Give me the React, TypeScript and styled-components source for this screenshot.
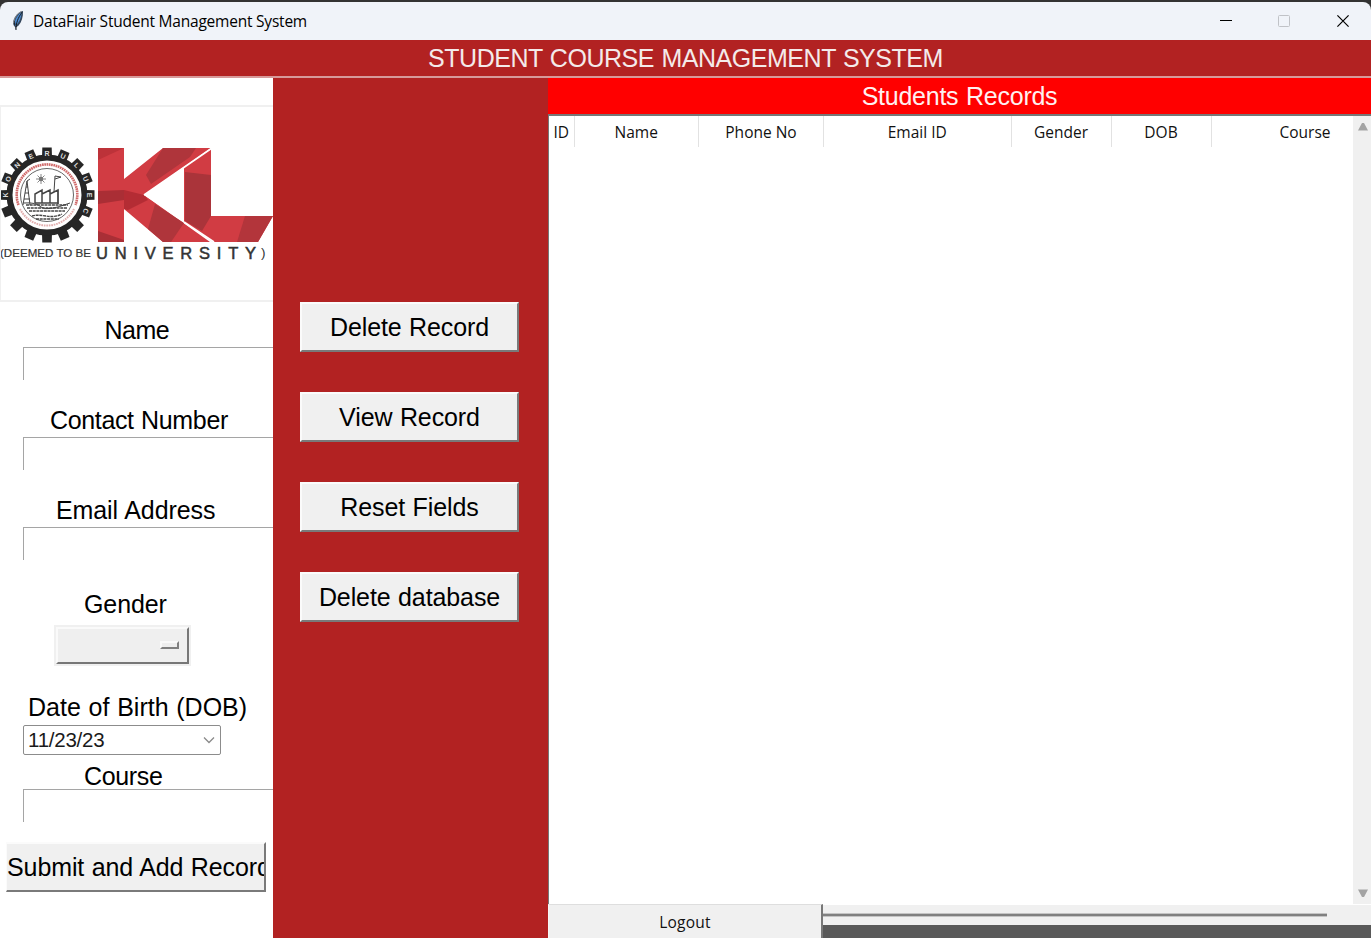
import React from "react";
import styled, { createGlobalStyle } from "styled-components";

const Global = createGlobalStyle`
  * { box-sizing: border-box; }
  html, body { margin: 0; padding: 0; height: 100%; overflow: hidden; background: #333333; }
`;

const tk = `"Liberation Sans", Arial, sans-serif`;
const ui = `"Open Sans", "Noto Sans", sans-serif`;

const Desktop = styled.div`
  width: 1371px;
  height: 938px;
  padding-top: 2px;
  background: #333333;
  overflow: hidden;
`;
const AppWindow = styled.div`
  display: flex;
  flex-direction: column;
  height: 936px;
  border-radius: 8px 8px 0 0;
  overflow: hidden;
`;
const TitleBar = styled.header`
  display: flex;
  align-items: center;
  flex: none;
  height: 38px;
  padding-left: 10px;
  background: #f0f3f9;
  font-family: ${ui};
`;
const Caption = styled.span<{ $w: number; $gap?: number }>`
  display: block;
  width: ${(p) => p.$w}px;
  margin: -1px 0 0 ${(p) => p.$gap ?? 0}px;
  font: 15.5px/20px ${ui};
  letter-spacing: -0.22px;
  white-space: nowrap;
  color: #000;
`;
const WindowControls = styled.div`
  display: flex;
  margin: 0 -1px 0 auto;
`;
const ControlButton = styled.button`
  display: flex;
  align-items: center;
  justify-content: center;
  width: 58.5px;
  height: 38px;
  padding: 0;
  border: 0;
  background: none;
`;
const Banner = styled.h1`
  display: flex;
  align-items: center;
  justify-content: center;
  flex: none;
  height: 38px;
  margin: 0;
  border-bottom: 2px solid #d79a9a;
  background: #b22222;
  color: #f4eaea;
  font: 400 25px/36px ${tk};
  letter-spacing: -0.46px;
  word-spacing: 0.9px;
`;
const Body = styled.main`
  display: grid;
  grid-template-columns: 273px 275px 823px;
  height: 860px;
`;
const FormPanel = styled.section`
  display: flex;
  flex-direction: column;
  align-items: flex-start;
  overflow: hidden;
  background: #fff;
`;
const LogoBox = styled.div`
  flex: none;
  width: 273px;
  height: 197px;
  margin-top: 27px;
  border: solid #f0f0f0;
  border-width: 2px 0 2px 1px;
`;
const FieldLabel = styled.label<{ $left: number; $top: number; $ls?: number }>`
  flex: none;
  height: 28px;
  margin: ${(p) => p.$top}px 0 0 ${(p) => p.$left}px;
  font: 25px/28px ${tk};
  letter-spacing: ${(p) => p.$ls ?? -0.35}px;
  word-spacing: 0.8px;
  white-space: nowrap;
  color: #000;
`;
const TextField = styled.input<{ $top?: number }>`
  flex: none;
  width: 260px;
  height: 33px;
  margin: ${(p) => p.$top ?? 3}px 0 0 23px;
  padding: 0 4px;
  border: solid #a5a5a5;
  border-width: 1.5px 0 0 1.5px;
  border-radius: 0;
  background: #fff;
  outline: 0;
  font: 20px ${tk};
`;
const OptionMenu = styled.div`
  flex: none;
  width: 137px;
  height: 41px;
  margin: 7px 0 0 54px;
  padding: 2px;
  background: #f0f0f0;
`;
const OptionFace = styled.div`
  display: flex;
  align-items: center;
  justify-content: flex-end;
  width: 133px;
  height: 37px;
  padding: 0 8px 2px 0;
  border: 2px solid;
  border-color: #fafafa #777 #777 #fafafa;
  background: #efefef;
`;
const OptionMark = styled.span`
  width: 19px;
  height: 8px;
  border: 2px solid;
  border-color: #fafafa #808080 #808080 #fafafa;
`;
const DateEntry = styled.div`
  display: flex;
  align-items: center;
  justify-content: space-between;
  flex: none;
  width: 198px;
  height: 30px;
  margin: 4px 0 0 23px;
  padding: 0 5px 0 4px;
  border: 1px solid #8c8c8c;
  border-radius: 2px;
  background: #fff;
  font: 20.5px/28px ${tk};
  letter-spacing: -0.25px;
  color: #1a1a1a;
`;
const RaisedButton = styled.button<{ $w: number }>`
  display: flex;
  align-items: center;
  justify-content: center;
  flex: none;
  width: ${(p) => p.$w}px;
  height: 50px;
  padding: 0;
  border: 2px solid;
  border-color: #fbfbfb #7a7a7a #7a7a7a #fbfbfb;
  border-radius: 0;
  background: #f0f0f0;
  color: #000;
  font: 25px/30px ${tk};
  letter-spacing: -0.1px;
  word-spacing: 0.6px;
  white-space: nowrap;
  overflow: hidden;
`;
const SubmitButton = styled(RaisedButton)`
  justify-content: flex-start;
  margin: 20px 0 0 6px;
  border-left-width: 1px;
`;
const ActionsPanel = styled.nav`
  display: flex;
  flex-direction: column;
  align-items: flex-start;
  gap: 40px;
  padding: 224px 0 0 27px;
  background: #b22222;
`;
const RecordsPanel = styled.section`
  display: flex;
  flex-direction: column;
  min-width: 0;
  background: #595959;
`;
const RecordsTitle = styled.h2`
  flex: none;
  height: 36px;
  margin: 0;
  background: #ff0000;
  color: #fff0f0;
  font: 400 25px/37px ${tk};
  letter-spacing: -0.25px;
  word-spacing: 1px;
  text-align: center;
`;
const TableArea = styled.div`
  display: flex;
  flex: none;
  height: 790px;
  border-top: 2px solid #777;
  background: #fff;
`;
const Table = styled.div`
  flex: none;
  width: 805px;
  overflow: hidden;
  border-left: 1px solid #777;
`;
const HeadRow = styled.div`
  display: flex;
  width: 853px;
  height: 31px;
`;
const HeadCell = styled.div<{ $w: number }>`
  flex: none;
  width: ${(p) => p.$w}px;
  border-right: 1px solid #e2e2e2;
  font: 15.5px/33px ${ui};
  text-align: center;
  white-space: nowrap;
  color: #111;
`;
const Scrollbar = styled.div`
  display: flex;
  flex-direction: column;
  justify-content: space-between;
  align-items: center;
  width: 18px;
  padding: 6px 0 6px 2px;
  background: #f0f0f0;
`;
const Footer = styled.footer`
  display: flex;
  flex: 1;
`;
const LogoutButton = styled.button`
  width: 275px;
  height: 35px;
  padding: 0;
  border: solid;
  border-width: 1px 2px 1px 1px;
  border-color: #dedede #777 #b5b5b5 #f6f6f6;
  border-radius: 0;
  background: #f0f0f0;
  font: 15.5px/30px ${ui};
  letter-spacing: 0.2px;
  color: #111;
`;
const HorizontalTrack = styled.div`
  flex: 1;
  height: 21px;
  padding-top: 8px;
  border-top: 1px solid #fff;
  background: #f0f0f0;
`;
const HorizontalThumb = styled.div`
  width: 504px;
  height: 4px;
  border: solid #c4c4c4;
  border-width: 1px 0;
  background: #808080;
`;

const Feather = () => (
  <svg width="16" height="22" viewBox="0 0 16 22">
    <path d="M5.8 20 L5.2 17 C2.6 15.5 2.6 11 5 7 C7.3 3.2 10 1.2 13 1 C13.3 7 11.5 12 8.6 15.6 L6.2 17.2 Z" fill="#34465c" />
    <path d="M5.5 16 C3.8 12 6 7 10.2 3 L11.5 2.3 C11.5 7 9.5 12 7 14.4 Z" fill="#4c8bd2" />
    <path d="M6 20 C5.8 13 8 8 12 2.2 M5 15 L4.4 11" stroke="#15191e" strokeWidth="1" fill="none" />
    <path d="M3.7 13 C3.8 8 8 3 11.5 1.5" stroke="#909398" strokeWidth=".9" fill="none" />
  </svg>
);

const teeth = Array.from({ length: 16 }, (_, i) => i * 22.5);
const badges = ["K", "O", "N", "E", "R", "U", "L", "U", "E", "C"];

const UniversityLogo = () => (
  <svg width="272" height="193" viewBox="1 107 272 193" style={{ display: "block" }}>
    <g>
      {teeth.map((a) => (
        <path key={a} d="M42 157 L42.3 147.5 H51.7 L52 157 Z" fill="#262626" transform={`rotate(${a} 47 195)`} />
      ))}
      <circle cx="47" cy="195" r="37.5" fill="#fff" stroke="#262626" strokeWidth="6" />
      {badges.map((c, i) => (
        <text key={i} x="47" y="155.5" fontSize="7" fontWeight="700" fontFamily="Liberation Sans" textAnchor="middle" fill="#ddd" transform={`rotate(${-90 + i * 22.5} 47 195)`}>
          {c}
        </text>
      ))}
      <path d="M18.5 205 A30.3 30.3 0 1 1 75.5 205" fill="none" stroke="#d06a6a" strokeWidth="2.6" strokeDasharray="1.7 .6" />
      <path d="M20 209 A30.3 30.3 0 0 0 74 209" fill="none" stroke="#e3b0b0" strokeWidth="2" strokeDasharray="1.7 .8" />
      <circle cx="47" cy="195" r="26.5" fill="#fff" stroke="#555" strokeWidth=".9" />
      <g stroke="#444" strokeWidth="1" fill="none">
        <path d="M23 205 L27 181 L30 205 M24 199 H30 M25 193 H29 M26 187 H28 M27 181 L30 179 M54 192 L55 176 L61 177 L55 179 M58 204 V190" />
        <path d="M35 203 V194 L42 190 V203 M42 194 L50 190 V203 M50 194 L58 190 V204 M35 203 H58" strokeWidth="1.5" />
        <path d="M26 205 H68 M27 208 H67 M29 211 H65 M32 216 C42 213 51 220 62 214 M36 219 H59" strokeWidth="1.4" strokeDasharray="3 .7" />
        <path d="M24 203 Q36 202 41 207 T70 203" />
      </g>
      <path d="M36 179 H46 M41 174 V184 M37.5 175.5 L44.5 182.5 M44.5 175.5 L37.5 182.5" stroke="#888" strokeWidth="1" />
      <circle cx="41" cy="179" r="2.2" fill="#777" />
    </g>
    <g>
      <path d="M98 148 H124 V242 H98 Z" fill="#d13c43" />
      <path d="M98 148 H124 L98 160 Z" fill="#bd3239" />
      <path d="M98 191 L124 190 V200 L98 204 Z" fill="#aa2e35" />
      <path d="M98 231 L124 240 V242 H98 Z" fill="#a92f36" />
      <path d="M124 179 L163 148 H211 L144 195 L210 242 H163 L124 209 Z" fill="#d13c43" />
      <path d="M163 148 H196 L190 157 L151 184 L146 175 Z" fill="#af353b" />
      <path d="M124 190 L144 195 L148 200 L128 210 L124 209 Z" fill="#b42c34" />
      <path d="M148 229 L155 204 L184 223 L171 242 H163 Z" fill="#af353b" />
      <path d="M184 167 L211 149 V216 H273 L258 242 H213 L184 222 Z" fill="#d13c43" />
      <path d="M185 172 L211 175 V216 L202 231 L185 221 Z" fill="#aa343a" />
      <path d="M245 216 H273 L258 242 H237 Z" fill="#b3353b" />
      <path d="M144 195 L212 148 M184 222 L214 242" stroke="#fff" strokeWidth="1.7" />
      <path d="M144 195 L184 167 V222 Z" fill="#fff" />
    </g>
    <g fontFamily="Liberation Sans" fill="#333" stroke="#333">
      <text x="0" y="257" fontSize="11.5" strokeWidth=".2" textLength="91" lengthAdjust="spacingAndGlyphs">(DEEMED TO BE</text>
      <text x="96" y="258.5" fontSize="16.5" strokeWidth=".5" textLength="160">UNIVERSITY</text>
      <text x="261" y="257" fontSize="13.5" strokeWidth="0">)</text>
    </g>
  </svg>
);

const columns: [string, number][] = [
  ["ID", 25.5],
  ["Name", 124.5],
  ["Phone No", 125],
  ["Email ID", 187.5],
  ["Gender", 100],
  ["DOB", 100],
  ["Course", 188],
];

export default function App() {
  return (
    <Desktop>
      <Global />
      <AppWindow>
        <TitleBar>
          <Feather />
          <Caption $w={290} $gap={7}>DataFlair Student Management System</Caption>
          <WindowControls>
            <ControlButton aria-label="Minimize">
              <svg width="12" height="12"><path d="M0 5.5 H12" stroke="#000" /></svg>
            </ControlButton>
            <ControlButton aria-label="Maximize">
              <svg width="12" height="12"><rect x=".5" y=".5" width="11" height="11" rx="1" fill="none" stroke="#c0c2c7" /></svg>
            </ControlButton>
            <ControlButton aria-label="Close">
              <svg width="12" height="12"><path d="M.4 .4 L11.6 11.6 M11.6 .4 L.4 11.6" stroke="#000" strokeWidth="1.2" /></svg>
            </ControlButton>
          </WindowControls>
        </TitleBar>
        <Banner>STUDENT COURSE MANAGEMENT SYSTEM</Banner>
        <Body>
          <FormPanel>
            <LogoBox><UniversityLogo /></LogoBox>
            <FieldLabel $left={104.5} $top={14} $ls={-0.5}>Name</FieldLabel>
            <TextField aria-label="Name" />
            <FieldLabel $left={50} $top={26}>Contact Number</FieldLabel>
            <TextField aria-label="Contact Number" />
            <FieldLabel $left={56} $top={26} $ls={-0.1}>Email Address</FieldLabel>
            <TextField aria-label="Email Address" />
            <FieldLabel $left={84} $top={30} $ls={-0.1}>Gender</FieldLabel>
            <OptionMenu><OptionFace><OptionMark /></OptionFace></OptionMenu>
            <FieldLabel $left={28} $top={27} $ls={0}>Date of Birth (DOB)</FieldLabel>
            <DateEntry>
              11/23/23
              <svg width="12" height="8"><path d="M1 1.5 L6 6.5 L11 1.5" fill="none" stroke="#8a8a8a" strokeWidth="1.3" /></svg>
            </DateEntry>
            <FieldLabel $left={84} $top={7}>Course</FieldLabel>
            <TextField $top={-1} aria-label="Course" />
            <SubmitButton $w={260}>Submit and Add Record</SubmitButton>
          </FormPanel>
          <ActionsPanel>
            <RaisedButton $w={219}>Delete Record</RaisedButton>
            <RaisedButton $w={219}>View Record</RaisedButton>
            <RaisedButton $w={219}>Reset Fields</RaisedButton>
            <RaisedButton $w={219}>Delete database</RaisedButton>
          </ActionsPanel>
          <RecordsPanel>
            <RecordsTitle>Students Records</RecordsTitle>
            <TableArea>
              <Table>
                <HeadRow>
                  {columns.map(([name, w]) => <HeadCell key={name} $w={w}>{name}</HeadCell>)}
                </HeadRow>
              </Table>
              <Scrollbar>
                <svg width="12" height="9"><path d="M1 8.5 L5 1 H7 L11 8.5 Z" fill="#a3a3a3" /></svg>
                <svg width="12" height="9"><path d="M1 .5 L5 8 H7 L11 .5 Z" fill="#a3a3a3" /></svg>
              </Scrollbar>
            </TableArea>
            <Footer>
              <LogoutButton>Logout</LogoutButton>
              <HorizontalTrack><HorizontalThumb /></HorizontalTrack>
            </Footer>
          </RecordsPanel>
        </Body>
      </AppWindow>
    </Desktop>
  );
}
